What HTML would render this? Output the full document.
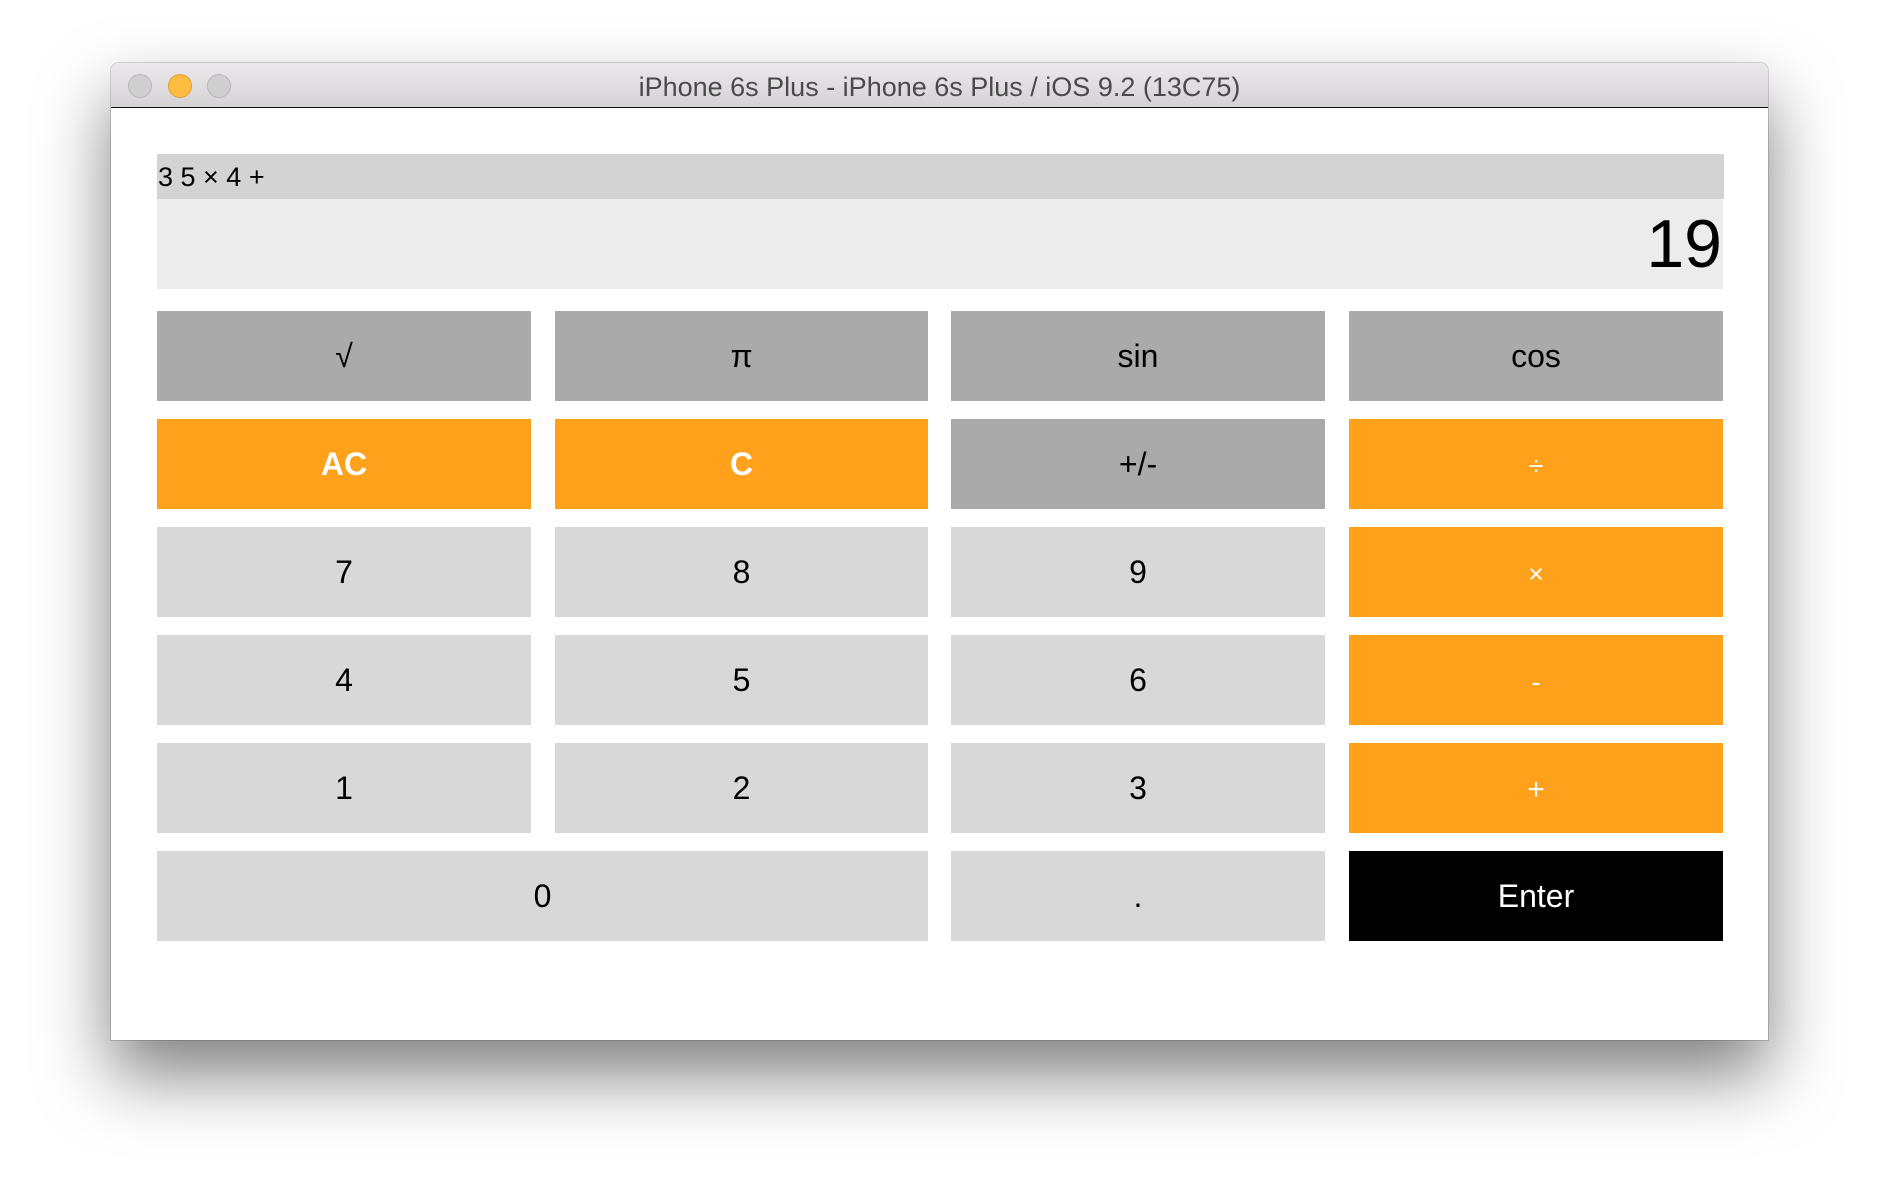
<!DOCTYPE html>
<html><head><meta charset="utf-8"><style>
html,body{margin:0;padding:0;width:1880px;height:1200px;background:#fff;overflow:hidden;font-family:"Liberation Sans",sans-serif}
#win{position:absolute;left:111px;top:63px;width:1657px;height:977px;background:#fff;border-radius:8px 8px 0 0;box-shadow:0 35px 70px rgba(0,0,0,0.5),0 0 0 1px rgba(0,0,0,0.15)}
#tb{position:absolute;left:0;top:0;width:100%;height:44px;border-radius:8px 8px 0 0;background:linear-gradient(#ebe9eb,#d4d2d4);border-bottom:1px solid #111}
#tb .t{position:absolute;left:0;right:0;top:9px;text-align:center;font-size:27px;color:#4a4a4a}
.dot{position:absolute;top:11px;width:22px;height:22px;border-radius:50%;background:#d0cfd0;border:1px solid #b9b8b9}
.b{position:absolute;height:90px;display:flex;align-items:center;justify-content:center;font-size:32px;color:#000;background:#d8d8d8}
.g{background:#aaaaaa}.o{background:#ffa11a;color:#fff}.k{background:#000;color:#fff}
.op{font-size:27px;padding-top:4px;box-sizing:border-box}
</style></head><body>
<div id="win">
<div id="tb">
<div class="dot" style="left:17px"></div>
<div class="dot" style="left:57px;background:#fdbc40;border-color:#dea236"></div>
<div class="dot" style="left:96px"></div>
<div class="t">iPhone 6s Plus - iPhone 6s Plus / iOS 9.2 (13C75)</div>
</div>
</div>
<div style="position:absolute;left:157px;top:154px;width:1566px;height:45px;background:#d3d3d3;font-size:27px;line-height:47px;padding-left:1px">3 5 × 4 +</div>
<div style="position:absolute;left:157px;top:199px;width:1566px;height:90px;background:#ececec"></div>
<div style="position:absolute;left:157px;top:199px;width:1565px;height:90px;text-align:right;font-size:68px;line-height:90px">19</div>

<div class="b g" style="left:157px;top:311px;width:374px">√</div>
<div class="b g" style="left:555px;top:311px;width:373px">π</div>
<div class="b g" style="left:951px;top:311px;width:374px">sin</div>
<div class="b g" style="left:1349px;top:311px;width:374px">cos</div>

<div class="b o" style="left:157px;top:419px;width:374px;font-weight:bold">AC</div>
<div class="b o" style="left:555px;top:419px;width:373px;font-weight:bold">C</div>
<div class="b g" style="left:951px;top:419px;width:374px">+/-</div>
<div class="b o op" style="left:1349px;top:419px;width:374px">÷</div>

<div class="b" style="left:157px;top:527px;width:374px">7</div>
<div class="b" style="left:555px;top:527px;width:373px">8</div>
<div class="b" style="left:951px;top:527px;width:374px">9</div>
<div class="b o op" style="left:1349px;top:527px;width:374px">×</div>

<div class="b" style="left:157px;top:635px;width:374px">4</div>
<div class="b" style="left:555px;top:635px;width:373px">5</div>
<div class="b" style="left:951px;top:635px;width:374px">6</div>
<div class="b o op" style="left:1349px;top:635px;width:374px">-</div>

<div class="b" style="left:157px;top:743px;width:374px">1</div>
<div class="b" style="left:555px;top:743px;width:373px">2</div>
<div class="b" style="left:951px;top:743px;width:374px">3</div>
<div class="b o op" style="left:1349px;top:743px;width:374px;font-size:30px">+</div>

<div class="b" style="left:157px;top:851px;width:771px">0</div>
<div class="b" style="left:951px;top:851px;width:374px">.</div>
<div class="b k" style="left:1349px;top:851px;width:374px">Enter</div>
</body></html>
